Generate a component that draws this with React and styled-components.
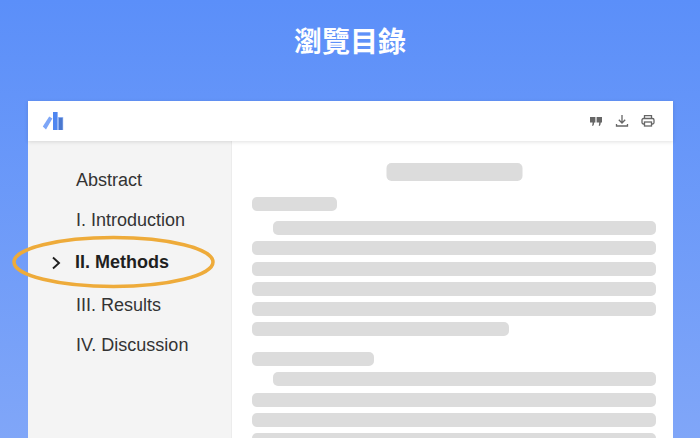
import React from "react";
import styled, { createGlobalStyle } from "styled-components";

const Global = createGlobalStyle`
  html, body { margin: 0; padding: 0; height: 100%; }
  body { overflow: hidden; font-family: "Liberation Sans", Arial, sans-serif; }
`;

const Page = styled.div`
  position: relative;
  width: 700px;
  height: 438px;
  overflow: hidden;
  background: linear-gradient(180deg, #5b8ff9 0%, #80a6f8 100%);
`;

const Title = styled.h1`
  margin: 0;
  height: 101px;
  padding-top: 21px;
  box-sizing: border-box;
  text-align: center;
  color: #fff;
  font: 700 28px/38px "Noto Sans CJK TC", "Noto Sans CJK SC", sans-serif;
`;

const Card = styled.div`
  margin-left: 28px;
  width: 645px;
  height: 337px;
  background: #fff;
  display: flex;
  flex-direction: column;
`;

const Header = styled.header`
  height: 40px;
  flex: none;
  display: flex;
  align-items: center;
  justify-content: space-between;
  padding: 0 18px 0 14px;
  box-shadow: 0 1px 4px rgba(0, 0, 0, 0.12);
  position: relative;
  z-index: 1;
`;

const Tools = styled.div`
  display: flex;
  align-items: center;
  gap: 12px;
`;

const Body = styled.div`
  flex: 1;
  display: flex;
  min-height: 0;
`;

const Sidebar = styled.nav`
  width: 203px;
  flex: none;
  background: #f4f4f4;
  border-right: 1px solid #ececec;
  padding-top: 19px;
`;

const NavItem = styled.div`
  height: ${p => (p.$active ? "45px" : "40px")};
  display: flex;
  align-items: center;
  padding-left: ${p => (p.$active ? "23px" : "48px")};
  gap: 14px;
  font-size: 18px;
  font-weight: ${p => (p.$active ? 700 : 400)};
  color: ${p => (p.$active ? "#1f1f1f" : "#333")};
  white-space: nowrap;
`;

const Content = styled.main`
  flex: 1;
  padding: 22px 17px 0 20px;
  display: flex;
  flex-direction: column;
  min-width: 0;
  overflow: hidden;
`;

const DocTitle = styled.div`
  flex: none;
  align-self: center;
  width: 136px;
  height: 18px;
  border-radius: 5px;
  background: #dcdcdc;
  margin-bottom: 16px;
  transform: translateX(0.5px);
`;

const Heading = styled.div`
  flex: none;
  width: ${p => p.$w}px;
  height: 14px;
  border-radius: 5px;
  background: #dcdcdc;
  margin-top: ${p => p.$top || 0}px;
  margin-bottom: ${p => p.$gap}px;
`;

const Line = styled.div`
  flex: none;
  height: 14px;
  border-radius: 5px;
  background: #dcdcdc;
  margin-left: ${p => (p.$indent ? "21px" : "0")};
  width: ${p => (p.$w ? `${p.$w}px` : "auto")};
  margin-bottom: 6.25px;
`;

const Ring = styled.svg`
  position: absolute;
  left: 11px;
  top: 235px;
`;

const Logo = () => (
  <svg width="22" height="18" viewBox="0 0 22 18">
    <path d="M0.8 14.6 L7.2 4.4 L10.4 6.6 L4 17.4 Z" fill="#7da6f7" />
    <rect x="11" y="0" width="4.6" height="18" fill="#4f86f0" />
    <rect x="16" y="5" width="5.2" height="13" fill="#9dbbf5" />
    <rect x="16.8" y="5.8" width="3.8" height="12.2" fill="#4a78cf" />
  </svg>
);

const Quote = () => (
  <svg width="14" height="12" viewBox="0 0 14 12" fill="#666">
    <path d="M1 2h5.4v5.4H5.2Q5.2 9.6 3.8 11L3.1 10.4Q3.6 9 3.6 7.4H1z" />
    <path d="M7.6 2H13v5.4h-1.2Q11.8 9.6 10.4 11L9.7 10.4Q10.2 9 10.2 7.4H7.6z" />
  </svg>
);

const Download = () => (
  <svg width="14" height="14" viewBox="0 0 14 14" fill="none" stroke="#666" strokeWidth="1.3">
    <path d="M7 1v7.5M3.8 5.8 7 9l3.2-3.2" />
    <path d="M1.5 10v2h11v-2" />
  </svg>
);

const Printer = () => (
  <svg width="14" height="14" viewBox="0 0 14 14" fill="none" stroke="#666" strokeWidth="1.3">
    <path d="M3.5 4.5V1.7h7v2.8" />
    <rect x="1" y="4.5" width="12" height="5.5" rx="1.5" />
    <rect x="3.5" y="8" width="7" height="4" fill="#fff" />
  </svg>
);

export default function App() {
  return (
    <Page>
      <Global />
      <Title>瀏覽目錄</Title>
      <Card>
        <Header>
          <Logo />
          <Tools>
            <Quote />
            <Download />
            <Printer />
          </Tools>
        </Header>
        <Body>
          <Sidebar>
            <NavItem>Abstract</NavItem>
            <NavItem>I. Introduction</NavItem>
            <NavItem $active>
              <svg width="10" height="14" viewBox="0 0 10 14" fill="none" stroke="#1f1f1f" strokeWidth="1.9">
                <path d="M2 1.5 L8 7 L2 12.5" />
              </svg>
              II. Methods
            </NavItem>
            <NavItem>III. Results</NavItem>
            <NavItem>IV. Discussion</NavItem>
          </Sidebar>
          <Content>
            <DocTitle />
            <Heading $w={85} $gap={10} />
            <Line $indent />
            <Line />
            <Line />
            <Line />
            <Line />
            <Line $w={257} />
            <Heading $w={122} $top={9.75} $gap={6} />
            <Line $indent />
            <Line />
            <Line />
            <Line />
          </Content>
        </Body>
      </Card>
      <Ring width="204" height="54" viewBox="0 0 204 54">
        <ellipse cx="102.5" cy="27" rx="99.5" ry="24.5" fill="none" stroke="#eeab3a" strokeWidth="3.5" />
      </Ring>
    </Page>
  );
}
